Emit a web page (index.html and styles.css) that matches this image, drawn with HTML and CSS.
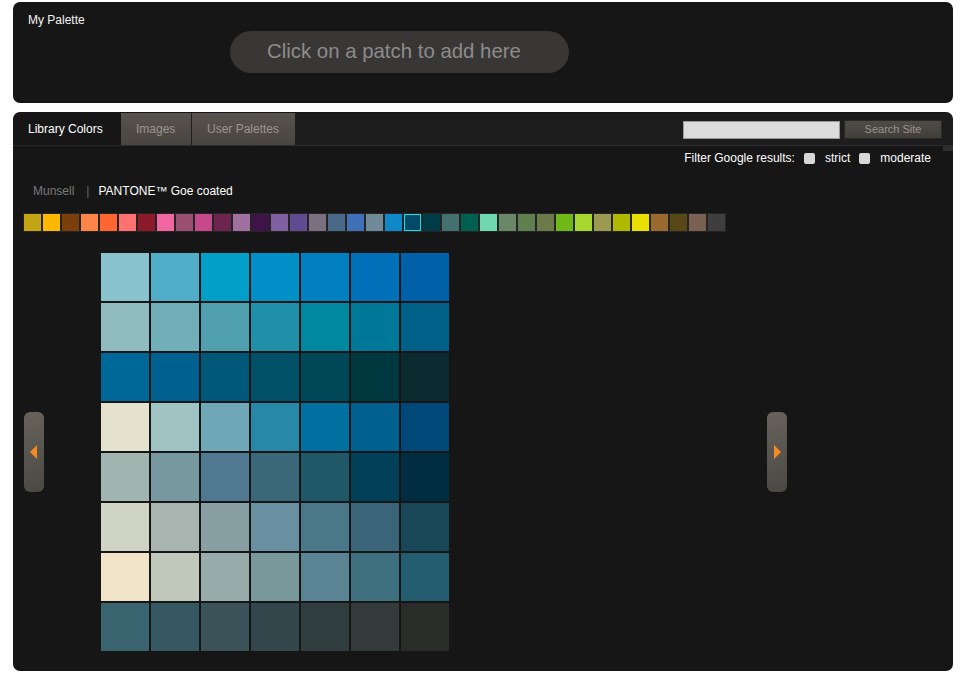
FILE: index.html
```html
<!DOCTYPE html>
<html>
<head>
<meta charset="utf-8">
<link rel="stylesheet" href="styles.css">
</head>
<body>
<div class="page">
  <section class="panel palette">
    <div class="palette-title">My Palette</div>
    <div class="drop-pill">Click on a patch to add here</div>
  </section>

  <section class="panel library">
    <div class="tabbar">
      <div class="tab tab-active">Library Colors</div>
      <div class="tab tab-off">Images</div>
      <div class="tab tab-off tab-sep">User Palettes</div>
      <div class="tab-fill"></div>
      <div class="search">
        <input class="search-input" type="text">
        <button class="search-btn">Search Site</button>
      </div>
    </div>
    <div class="corner-nub"></div>
    <div class="filter-row">
      <span>Filter Google results:</span>
      <span class="cb"></span><span>strict</span>
      <span class="cb"></span><span>moderate</span>
    </div>
    <div class="lib-row">
      <span class="lib-off">Munsell</span>
      <span class="lib-sep">|</span>
      <span class="lib-on">PANTONE™ Goe coated</span>
    </div>
    <div class="strip" id="strip"></div>
    <div class="stage">
      <div class="arrow arrow-left"><span class="tri tri-left"></span></div>
      <div class="grid" id="grid"></div>
      <div class="arrow arrow-right"><span class="tri tri-right"></span></div>
    </div>
  </section>
</div>
<script src="app.js"></script>
</body>
</html>
```

FILE: app.js
```js
var strip = ["#c4a614","#ffb800","#7a3f0a","#ff8448","#ff6630","#ff7070","#8b1a2b","#f066a0","#9a5070","#c44a8c","#6d2550","#a070a0","#3e1448","#7e60a0","#604a90","#7a7080","#4a6888","#4070b8","#708898","#1088c8","#004a68","#003c48","#457070","#006050","#70d8b0","#6a8868","#5e8050","#6a7a48","#70b818","#a8d830","#9a9a50","#b0b800","#e8e000","#9a6a30","#584818","#7a6050","#3e3e3e"];
var grid = [
 ["#88c2cc","#50aec8","#00a0c8","#0090c8","#0080c0","#0070b8","#0060a8"],
 ["#90bcc0","#70aeb8","#50a0b0","#2090a8","#0088a0","#007898","#006088"],
 ["#006898","#006090","#005878","#005068","#004858","#003840","#0a2a30"],
 ["#e4e2cc","#a0c4c4","#70a8b8","#2888a8","#0070a0","#006090","#004878"],
 ["#a0b4b0","#7898a0","#507890","#3a6878","#205868","#004058","#002e40"],
 ["#d0d4c4","#a8b4b0","#88a0a4","#6890a0","#4a7888","#3a6478","#184858"],
 ["#f2e4c8","#c0c8bc","#98acac","#78989c","#5a8494","#3e7080","#245c70"],
 ["#3a6470","#355862","#3a5258","#33464c","#303e40","#343a3a","#2a2c2a"]
];
var s = document.getElementById("strip");
strip.forEach(function (c, i) {
  var d = document.createElement("div");
  d.className = "chip" + (i === 20 ? " chip-sel" : "");
  d.style.background = c;
  s.appendChild(d);
});
var g = document.getElementById("grid");
grid.forEach(function (row) {
  row.forEach(function (c) {
    var d = document.createElement("div");
    d.className = "cell";
    d.style.background = c;
    g.appendChild(d);
  });
});
```

FILE: styles.css
```css
html, body {
  margin: 0;
  padding: 0;
  background: #ffffff;
}
body {
  font-family: "Liberation Sans", Arial, sans-serif;
  font-size: 12px;
  color: #ffffff;
}
.page {
  padding: 2px 10px 0 13px;
  display: flex;
  flex-direction: column;
  gap: 9px;
  width: 940px;
}
.panel {
  background: #161616;
  border-radius: 7px;
  box-sizing: border-box;
}
.palette {
  height: 101px;
  padding: 11px 0 0 15px;
  position: relative;
}
.palette-title {
  line-height: 14px;
  color: #f4f4f4;
}
.drop-pill {
  margin: 4px 0 0 202px;
  width: 339px;
  height: 42px;
  border-radius: 21px;
  background: #383736;
  color: #8c8c8c;
  font-size: 20.4px;
  line-height: 41px;
  box-sizing: border-box;
  padding-left: 37px;
}
.library {
  height: 559px;
  position: relative;
  padding-top: 1px;
  overflow: hidden;
}
.tabbar {
  display: flex;
  height: 32px;
  background: #1d1d1d;
  border-bottom: 1px solid #2c2c2c;
  border-radius: 7px 7px 0 0;
}
.tab {
  line-height: 31px;
  padding-top: 1px;
  box-sizing: border-box;
  text-align: left;
  padding-left: 15px;
}
.tab-active {
  width: 108px;
  background: #161616;
  color: #ffffff;
  border-top-left-radius: 7px;
}
.tab-off {
  background: linear-gradient(#58534d, #48443f);
  color: #9a958e;
  width: 70px;
}
.tab-sep {
  width: 104px;
  border-left: 1px solid #1e1e1e;
}
.tab-fill {
  flex: 1;
}
.search {
  display: flex;
  align-items: center;
  gap: 4px;
  padding-right: 11px;
  padding-top: 1px;
}
.search-input {
  width: 157px;
  height: 18px;
  box-sizing: border-box;
  border: 1px solid #9a9a9a;
  background: #dcdcdc;
  padding: 0;
  margin: 0;
}
.search-btn {
  width: 98px;
  height: 19px;
  margin: 0;
  padding: 0;
  border: 1px solid #2a2826;
  background: linear-gradient(#504b46, #413e3a);
  color: #9a958e;
  font-family: "Liberation Sans", Arial, sans-serif;
  font-size: 11px;
  line-height: 17px;
}
.corner-nub {
  position: absolute;
  right: 0;
  top: 34px;
  width: 10px;
  height: 5px;
  background: #2e2e2e;
}
.filter-row {
  display: flex;
  justify-content: flex-end;
  align-items: center;
  gap: 9px;
  padding: 5px 22px 0 0;
  height: 14px;
  line-height: 14px;
}
.cb {
  width: 11px;
  height: 11px;
  border-radius: 2px;
  background: #d8d8d8;
  margin-right: 1px;
}
.lib-row {
  padding: 19px 0 0 20px;
  line-height: 14px;
  display: flex;
}
.lib-off {
  color: #7a7a7a;
}
.lib-sep {
  color: #666666;
  margin: 0 9px 0 12px;
}
.lib-on {
  color: #ffffff;
}
.strip {
  margin: 15px 0 0 10px;
  display: flex;
  gap: 2px;
  padding: 1px;
  background: #252525;
  width: max-content;
}
.chip {
  width: 17px;
  height: 17px;
  box-sizing: border-box;
}
.chip-sel {
  border: 1px solid #12e4ee;
}
.stage {
  margin-top: 21px;
  display: flex;
  align-items: center;
  padding-left: 11px;
}
.arrow {
  width: 20px;
  height: 80px;
  border-radius: 6px;
  background: linear-gradient(160deg, #67625b, #4b4844);
  display: flex;
  align-items: center;
}
.arrow-left {
  margin-right: 57px;
}
.arrow-right {
  margin-left: 318px;
}
.tri {
  width: 0;
  height: 0;
  border-top: 7.5px solid transparent;
  border-bottom: 7.5px solid transparent;
}
.tri-left {
  border-right: 7px solid #f68b1f;
  margin-left: 6px;
}
.tri-right {
  border-left: 7px solid #f68b1f;
  margin-left: 7px;
}
.grid {
  display: grid;
  grid-template-columns: repeat(7, 48px);
  grid-auto-rows: 48px;
  gap: 2px;
}
.cell {
  width: 48px;
  height: 48px;
}
```
